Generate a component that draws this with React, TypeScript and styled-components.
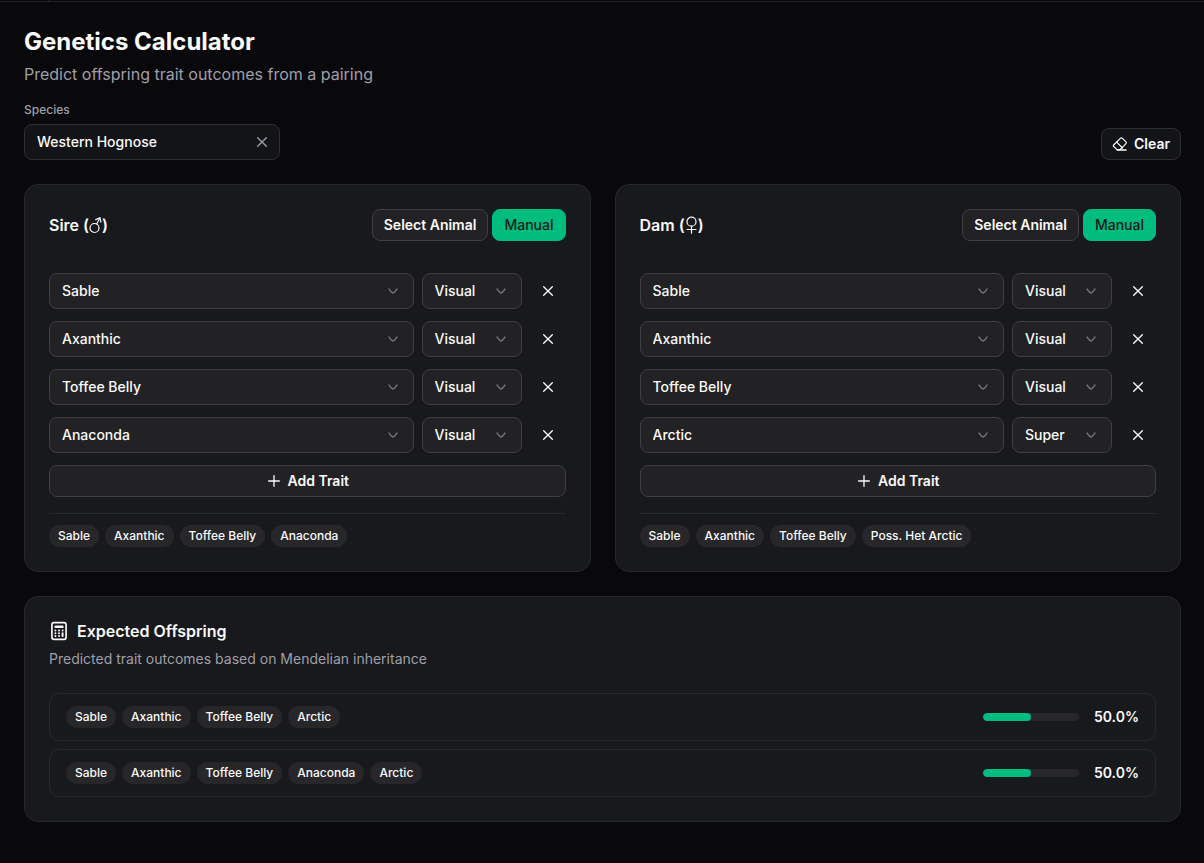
import React, { useState } from "react";
import styled, { createGlobalStyle, css } from "styled-components";

const GlobalStyle = createGlobalStyle`
  * { box-sizing: border-box; }
  body {
    margin: 0;
    background: #09090b;
    color: #fafafa;
    font-family: Inter, "DejaVu Sans", sans-serif;
    font-size: 14px;
    line-height: 20px;
  }
  button, input, select { font: inherit; color: inherit; margin: 0; }
  h1, h2, p, ul { margin: 0; padding: 0; }
`;

const TopBar = styled.div`
  border-bottom: 1px solid #232326;
`;

const TopBarSlot = styled.div`
  width: 49px;
  height: 1px;
  border-right: 1px solid #232326;
`;

const Main = styled.main`
  display: flex;
  flex-direction: column;
  gap: 24px;
  padding: 24px 23px 40px 24px;
`;

const Header = styled.header`
  display: flex;
  flex-direction: column;
`;

const PageTitle = styled.h1`
  font-size: 24px;
  line-height: 32px;
  font-weight: 700;
`;

const PageSubtitle = styled.p`
  margin-top: 4px;
  font-size: 16px;
  line-height: 24px;
  color: #9f9fa9;
`;

const Toolbar = styled.div`
  display: flex;
  align-items: flex-end;
  justify-content: space-between;
  margin-top: 16px;
`;

const Field = styled.div`
  display: flex;
  flex-direction: column;
  gap: 6px;
  width: 256px;
`;

const FieldLabel = styled.label`
  font-size: 12px;
  line-height: 16px;
  font-weight: 500;
  color: #9f9fa9;
`;

const InputShell = styled.div`
  display: flex;
  align-items: center;
  height: 36px;
  padding: 0 8px 0 12px;
  border: 1px solid #2e2f32;
  border-radius: 8px;
  background: #131417;
`;

const TextInput = styled.input`
  flex: 1;
  min-width: 0;
  padding: 0;
  border: 0;
  outline: 0;
  background: transparent;
  font-weight: 500;
`;

const IconButton = styled.button<{ $size: number; $muted?: boolean }>`
  display: flex;
  align-items: center;
  justify-content: center;
  flex: none;
  width: ${(p) => p.$size}px;
  height: ${(p) => p.$size}px;
  padding: 0;
  border: 0;
  background: transparent;
  color: ${(p) => (p.$muted ? "#9f9fa9" : "#fafafa")};
`;

const Button = styled.button<{ $variant?: "primary" | "outline" | "subtle"; $block?: boolean }>`
  display: flex;
  align-items: center;
  justify-content: center;
  gap: 6px;
  height: 32px;
  padding: 0 12px;
  border: 1px solid #3f3f42;
  border-radius: 8px;
  background: #222224;
  font-weight: 600;
  white-space: nowrap;
  ${(p) => p.$block && css`width: 100%;`}
  ${(p) =>
    p.$variant === "subtle" &&
    css`
      padding: 0 10px;
      border-color: #2e2f32;
      background: #131417;
    `}
  ${(p) =>
    p.$variant === "outline" &&
    css`
      padding: 0 11px;
    `}
  ${(p) =>
    p.$variant === "primary" &&
    css`
      padding: 0 11px;
      border-color: #00bc7d;
      background: #00bc7d;
      color: #18181b;
      font-weight: 500;
    `}
`;

const Parents = styled.div`
  display: grid;
  grid-template-columns: 1fr 1fr;
  gap: 24px;
`;

const Card = styled.section`
  padding: 24px;
  border: 1px solid #27282b;
  border-radius: 14px;
  background: #18191c;
`;

const CardHeader = styled.div`
  display: flex;
  align-items: center;
  justify-content: space-between;
  margin-bottom: 32px;
`;

const CardTitle = styled.h2`
  display: flex;
  align-items: center;
  font-size: 16px;
  line-height: 20px;
  font-weight: 600;
`;

const ModeSwitch = styled.div`
  display: flex;
  gap: 4px;
`;

const TraitEditor = styled.div`
  display: flex;
  flex-direction: column;
  gap: 12px;
`;

const TraitRow = styled.div`
  display: flex;
  gap: 8px;
`;

const SelectShell = styled.div<{ $fixed?: boolean }>`
  display: grid;
  align-items: center;
  ${(p) => (p.$fixed ? "flex: none; width: 100px;" : "flex: 1; min-width: 0;")}

  > * { grid-area: 1 / 1; }
  > svg { justify-self: end; margin-right: 13px; color: #74747a; pointer-events: none; }
`;

const NativeSelect = styled.select`
  appearance: none;
  width: 100%;
  height: 36px;
  padding: 0 32px 0 12px;
  border: 1px solid #3f3f42;
  border-radius: 8px;
  background: #222224;
  font-weight: 500;
`;

const TagList = styled.ul<{ $divided?: boolean }>`
  display: flex;
  flex-wrap: wrap;
  gap: 6px;
  list-style: none;
  ${(p) =>
    p.$divided &&
    css`
      margin-top: 16px;
      padding-top: 11px;
      border-top: 1px solid #27282b;
    `}
`;

const Tag = styled.li`
  padding: 3px 9px;
  border-radius: 11px;
  background: #27272a;
  font-size: 12px;
  line-height: 16px;
  font-weight: 500;
`;

const ResultsTitle = styled(CardTitle)`
  gap: 8px;
`;

const ResultsSubtitle = styled.p`
  margin-top: 8px;
  color: #9f9fa9;
`;

const Outcomes = styled.div`
  display: flex;
  flex-direction: column;
  gap: 8px;
  margin-top: 24px;
`;

const Outcome = styled.div`
  display: flex;
  align-items: center;
  justify-content: space-between;
  height: 48px;
  padding: 0 16px;
  border: 1px solid #27282b;
  border-radius: 10px;
`;

const Chance = styled.div`
  display: flex;
  align-items: center;
  gap: 12px;
`;

const Track = styled.div`
  width: 96px;
  height: 8px;
  border-radius: 4px;
  background: #27272a;
  overflow: hidden;
`;

const Fill = styled.div`
  height: 100%;
  border-radius: 4px;
  background: #00bc7d;
`;

const Percent = styled.span`
  width: 48px;
  text-align: right;
  font-weight: 600;
`;

const iconProps = {
  fill: "none",
  stroke: "currentColor",
  strokeLinecap: "round" as const,
  strokeLinejoin: "round" as const,
  viewBox: "0 0 24 24",
  "aria-hidden": true,
};

const CloseIcon = () => (
  <svg {...iconProps} width="16" height="16" strokeWidth="2">
    <path d="M18.500 5.500 5.500 18.500M5.500 5.500l13 13" />
  </svg>
);

const PlusIcon = () => (
  <svg {...iconProps} width="16" height="16" strokeWidth="2" viewBox="0 0 24 24">
    <path d="M12 4v16M4 12h16" />
  </svg>
);

const ChevronIcon = () => (
  <svg {...iconProps} width="16" height="16" strokeWidth="2">
    <path d="M18 9s-4.400 6-6 6-6-6-6-6" />
  </svg>
);

const EraserIcon = () => (
  <svg {...iconProps} width="16" height="16" strokeWidth="1.800">
    <path d="M2.500 13.500 12.500 3.500c1-1 2.200-1 3.200 0l5 5c1 1 1 2.200 0 3.200L12 20.500H7.500L2.500 15.800c-.7-.7-.7-1.600 0-2.300Z" />
    <path d="M7 9.200 15.800 18" />
    <path d="M8 21h13" strokeWidth="2.200" />
  </svg>
);

const CalculatorIcon = () => (
  <svg {...iconProps} width="20" height="20" strokeWidth="2">
    <rect x="3.500" y="2" width="17" height="20" rx="2.500" />
    <path d="M7.500 6.500h9v1h-9z" />
    <path strokeWidth="2.400" d="M7.700 11.500h.01M12 11.500h.01M16.300 11.500h.01M7.700 14.800h.01M12 14.800h.01M16.300 14.800v3.200M7.700 18h.01M12 18h.01" />
  </svg>
);

const MaleIcon = () => (
  <svg {...iconProps} width="13" height="18" viewBox="0 0 13 18" strokeWidth="1.200">
    <circle cx="5.500" cy="12" r="4.500" />
    <path d="M7.700 8 11 1.700M6.700 3.600 11 1.700l.9 4.500" />
  </svg>
);

const FemaleIcon = () => (
  <svg {...iconProps} width="13" height="18" viewBox="0 0 13 18" strokeWidth="1.200">
    <circle cx="6.500" cy="5.700" r="4.500" />
    <path d="M6.500 10.200v7M2 13.500h9" />
  </svg>
);

type Trait = [name: string, form: string];

const TRAITS = ["Sable", "Axanthic", "Toffee Belly", "Anaconda", "Arctic"];
const FORMS = ["Visual", "Super", "Het"];

const Select = ({ value, options, label, fixed }: { value: string; options: string[]; label: string; fixed?: boolean }) => (
  <SelectShell $fixed={fixed}>
    <NativeSelect defaultValue={value} aria-label={label}>
      {options.map((o) => (
        <option key={o}>{o}</option>
      ))}
    </NativeSelect>
    <ChevronIcon />
  </SelectShell>
);

const Tags = ({ items, divided }: { items: string[]; divided?: boolean }) => (
  <TagList $divided={divided}>
    {items.map((t) => (
      <Tag key={t}>{t}</Tag>
    ))}
  </TagList>
);

const ParentCard = ({ name, symbol, traits, summary }: { name: string; symbol: React.ReactNode; traits: Trait[]; summary: string[] }) => (
  <Card>
    <CardHeader>
      <CardTitle>
        {name}&nbsp;({symbol})
      </CardTitle>
      <ModeSwitch>
        <Button type="button" $variant="outline">Select Animal</Button>
        <Button type="button" $variant="primary">Manual</Button>
      </ModeSwitch>
    </CardHeader>
    <TraitEditor>
      {traits.map(([trait, form]) => (
        <TraitRow key={trait}>
          <Select value={trait} options={TRAITS} label={`${name} trait`} />
          <Select value={form} options={FORMS} label={`${trait} form`} fixed />
          <IconButton type="button" $size={36} aria-label={`Remove ${trait}`}>
            <CloseIcon />
          </IconButton>
        </TraitRow>
      ))}
      <Button type="button" $block>
        <PlusIcon />
        Add Trait
      </Button>
    </TraitEditor>
    <Tags items={summary} divided />
  </Card>
);

const OUTCOMES = [
  { traits: ["Sable", "Axanthic", "Toffee Belly", "Arctic"], chance: 50 },
  { traits: ["Sable", "Axanthic", "Toffee Belly", "Anaconda", "Arctic"], chance: 50 },
];

export default function App() {
  const [species, setSpecies] = useState("Western Hognose");

  return (
    <>
      <GlobalStyle />
      <TopBar>
        <TopBarSlot />
      </TopBar>
      <Main>
        <Header>
          <PageTitle>Genetics Calculator</PageTitle>
          <PageSubtitle>Predict offspring trait outcomes from a pairing</PageSubtitle>
          <Toolbar>
            <Field>
              <FieldLabel htmlFor="species">Species</FieldLabel>
              <InputShell>
                <TextInput id="species" value={species} onChange={(e) => setSpecies(e.target.value)} />
                <IconButton type="button" $size={18} $muted aria-label="Clear species" onClick={() => setSpecies("")}>
                  <CloseIcon />
                </IconButton>
              </InputShell>
            </Field>
            <Button type="button" $variant="subtle">
              <EraserIcon />
              Clear
            </Button>
          </Toolbar>
        </Header>

        <Parents>
          <ParentCard
            name="Sire"
            symbol={<MaleIcon />}
            traits={[["Sable", "Visual"], ["Axanthic", "Visual"], ["Toffee Belly", "Visual"], ["Anaconda", "Visual"]]}
            summary={["Sable", "Axanthic", "Toffee Belly", "Anaconda"]}
          />
          <ParentCard
            name="Dam"
            symbol={<FemaleIcon />}
            traits={[["Sable", "Visual"], ["Axanthic", "Visual"], ["Toffee Belly", "Visual"], ["Arctic", "Super"]]}
            summary={["Sable", "Axanthic", "Toffee Belly", "Poss. Het Arctic"]}
          />
        </Parents>

        <Card>
          <ResultsTitle>
            <CalculatorIcon />
            Expected Offspring
          </ResultsTitle>
          <ResultsSubtitle>Predicted trait outcomes based on Mendelian inheritance</ResultsSubtitle>
          <Outcomes>
            {OUTCOMES.map(({ traits, chance }) => (
              <Outcome key={traits.join()}>
                <Tags items={traits} />
                <Chance>
                  <Track>
                    <Fill style={{ width: `${chance}%` }} />
                  </Track>
                  <Percent>{chance.toFixed(1)}%</Percent>
                </Chance>
              </Outcome>
            ))}
          </Outcomes>
        </Card>
      </Main>
    </>
  );
}
